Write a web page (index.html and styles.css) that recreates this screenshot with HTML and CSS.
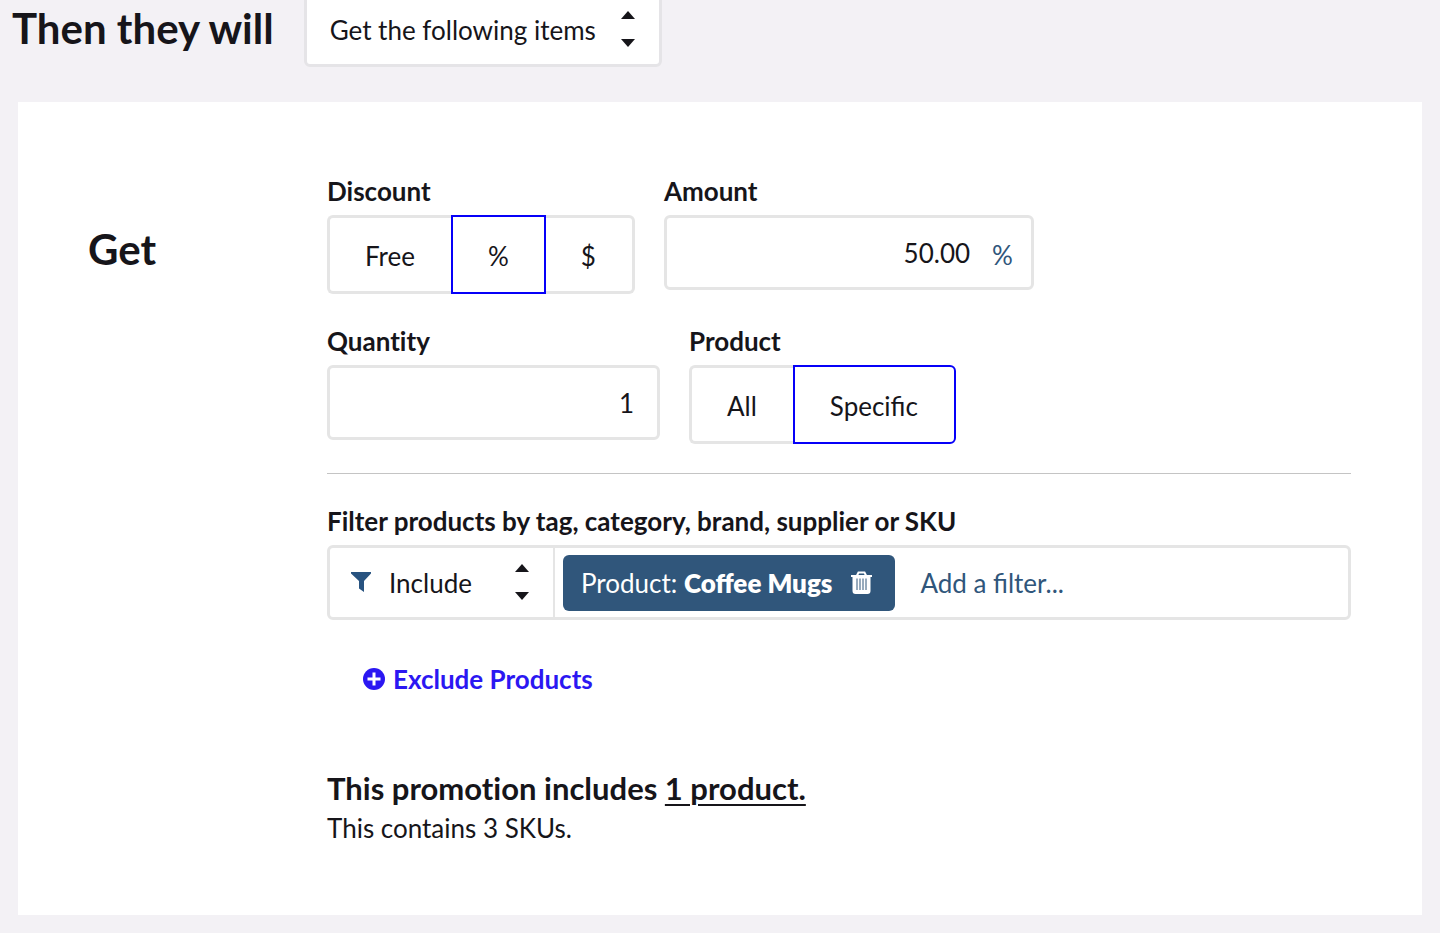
FILE: index.html
```
<!DOCTYPE html>
<html lang="en">
  <head>
    <meta charset="utf-8">
    <title>Promotion</title>
    <link rel="stylesheet" href="styles.css">
  </head>
  <body>
    <!-- Action -->
    <header class="action-bar">
      <label class="title" for="action">Then they will</label>
      <div class="select action-select">
        <select id="action">
          <option>Get the following items</option>
          <option>Get a discount</option>
        </select>
        <svg class="arrows" viewBox="0 0 14 36" aria-hidden="true">
          <path d="M0 8 7 0l7 8zM0 28h14l-7 8z"/>
        </svg>
      </div>
    </header>

    <main class="panel">
      <h2 class="title panel-title">Get</h2>

      <div class="panel-body">
        <!-- Discount -->
        <div class="row">
          <div class="field">
            <span class="label" id="discount-label">Discount</span>
            <div class="toggle" role="group" aria-labelledby="discount-label">
              <button type="button">Free</button>
              <button type="button" class="active" aria-pressed="true">%</button>
              <button type="button">$</button>
            </div>
          </div>
          <div class="field amount">
            <label class="label" for="amount">Amount</label>
            <div class="input-box">
              <input type="text" id="amount" value="50.00">
              <span class="unit">%</span>
            </div>
          </div>
        </div>

        <!-- Quantity -->
        <div class="row">
          <div class="field quantity">
            <label class="label" for="quantity">Quantity</label>
            <div class="input-box">
              <input type="text" id="quantity" value="1">
            </div>
          </div>
          <div class="field">
            <span class="label" id="product-label">Product</span>
            <div class="toggle" role="group" aria-labelledby="product-label">
              <button type="button">All</button>
              <button type="button" class="active" aria-pressed="true">Specific</button>
            </div>
          </div>
        </div>

        <hr>

        <!-- Product filters -->
        <div class="field">
          <label class="label" for="filter">Filter products by tag, category, brand, supplier or SKU</label>
          <div class="filter-box">
            <div class="select filter-select">
              <svg class="funnel" viewBox="0 0 20 20" aria-hidden="true">
                <path d="M0 0h20v1.500l-7 7.500V20l-5-3.500V9L0 1.500z"/>
              </svg>
              <select id="filter-mode" aria-label="Filter mode">
                <option>Include</option>
                <option>Exclude</option>
              </select>
              <svg class="arrows" viewBox="0 0 14 36" aria-hidden="true">
                <path d="M0 8 7 0l7 8zM0 28h14l-7 8z"/>
              </svg>
            </div>
            <div class="tag">
              <span>Product: <b>Coffee Mugs</b></span>
              <button type="button" aria-label="Remove filter">
                <svg class="trash" viewBox="0 0 21 23" aria-hidden="true">
                  <path class="lid" d="M6 4.500 7.500 1.500h6L15 4.500"/>
                  <path d="M0 4h21v2h-1.500v14q0 3-3 3h-12q-3 0-3-3V6H0z"/>
                  <path class="slots" d="M6 7.500V19M9 7.500V19M12 7.500V19M15 7.500V19"/>
                </svg>
              </button>
            </div>
            <input type="text" id="filter" placeholder="Add a filter...">
          </div>
        </div>

        <button type="button" class="exclude">
          <svg viewBox="0 0 22 22" aria-hidden="true">
            <circle cx="11" cy="11" r="11"/>
            <path d="M11 4.500v13M4.500 11h13"/>
          </svg>
          Exclude Products
        </button>

        <!-- Summary -->
        <h3 class="summary">This promotion includes <a href="#">1 product.</a></h3>
        <p class="summary-note">This contains 3 SKUs.</p>
      </div>
    </main>
  </body>
</html>
```

FILE: styles.css
```
* {
  margin: 0;
  padding: 0;
  box-sizing: border-box;
}

body {
  background: #f3f1f5;
  color: #16151a;
  font-family: Lato, "Liberation Sans", sans-serif;
  font-size: 26px;
  line-height: 32px;
  padding: 0 18px 18px;
}

button,
input,
select {
  font: inherit;
  color: inherit;
  background: none;
  border: 0;
  outline: 0;
  appearance: none;
}

button,
select {
  cursor: pointer;
}

.title {
  font-size: 42px;
  line-height: 52px;
  font-weight: 700;
}

/* Action bar, scrolled slightly under the top edge */
.action-bar {
  display: flex;
  align-items: flex-start;
  gap: 30px;
  margin: -8px 0 35px -6px;
}

.action-bar .title {
  margin-top: 10px;
}

.select {
  position: relative;
  display: flex;
  align-items: center;
}

.select select {
  width: 100%;
  height: 100%;
}

.arrows {
  position: absolute;
  right: 24px;
  width: 14px;
  height: 36px;
  margin-bottom: 2px;
  fill: #16151a;
  pointer-events: none;
}

.action-select {
  width: 358px;
  height: 75px;
  background: #fff;
  border: 3px solid #e5e4e7;
  border-radius: 6px;
}

.action-select select {
  padding-left: 23px;
}

/* Panel */
.panel {
  display: flex;
  background: #fff;
  padding: 73px 71px 71px 70px;
}

.panel-title {
  flex: 0 0 239px;
  margin-top: 48px;
}

.panel-body {
  flex: 1;
  min-width: 0;
}

.row {
  display: flex;
  align-items: flex-start;
  gap: 29px;
  margin-bottom: 31px;
}

.label {
  display: block;
  font-weight: 700;
  font-variant-ligatures: none;
  margin-bottom: 8px;
}

.amount {
  width: 370px;
}

.quantity {
  width: 333px;
}

.input-box,
.filter-box {
  display: flex;
  align-items: center;
  height: 75px;
  border: 3px solid #e5e5e5;
  border-radius: 6px;
}

.input-box {
  padding-right: 23px;
}

.input-box input {
  flex: 1;
  min-width: 0;
  height: 100%;
  text-align: right;
}

.amount .input-box {
  padding-right: 18px;
  gap: 22px;
}

.unit {
  color: #30567b;
  padding-top: 4px;
}

.toggle {
  display: flex;
  height: 79px;
}

.toggle button {
  padding: 2px 35px 0;
  border: 3px solid #e5e5e5;
  border-width: 3px 0;
}

.toggle button:first-child {
  padding: 2px 36px 0 35px;
  border-left-width: 3px;
  border-radius: 6px 0 0 6px;
}

.toggle button:last-child {
  padding: 2px 36px 0 35px;
  border-right-width: 3px;
  border-radius: 0 6px 6px 0;
}

.toggle button.active {
  border: 2px solid #0600f8;
}

hr {
  border: 0;
  border-top: 1px solid #c4c4c4;
  margin: -2px 0 31px;
}

/* Filters */
.filter-select {
  width: 225px;
  height: 100%;
  border-right: 2px solid #e5e5e5;
}

.filter-select select {
  padding-left: 59px;
}

.funnel {
  position: absolute;
  left: 21px;
  width: 20px;
  height: 20px;
  margin-bottom: 2px;
  fill: #285380;
  pointer-events: none;
}

.tag {
  display: flex;
  align-items: center;
  gap: 19px;
  height: 56px;
  margin-left: 8px;
  padding: 0 23px 0 18px;
  background: #30567b;
  border-radius: 6px;
  color: #fff;
  white-space: nowrap;
}

.tag b {
  font-weight: 800;
}

.tag button {
  display: flex;
}

.trash {
  width: 21px;
  height: 23px;
  fill: #fff;
}

.trash .lid {
  fill: none;
  stroke: #fff;
  stroke-width: 2;
}

.trash .slots {
  stroke: #30567b;
  stroke-width: 1;
}

.filter-box > input {
  flex: 1;
  min-width: 0;
  height: 100%;
  padding: 0 25px;
}

.filter-box > input::placeholder {
  color: #30567b;
  opacity: 1;
}

.exclude {
  display: flex;
  align-items: center;
  gap: 8px;
  margin: 43px 0 73px 36px;
  color: #2b17f2;
  font-weight: 700;
}

.exclude svg {
  width: 22px;
  height: 22px;
  fill: #2b17f2;
}

.exclude path {
  stroke: #fff;
  stroke-width: 3;
}

/* Summary */
.summary {
  font-size: 31px;
  line-height: 40px;
  font-weight: 700;
  font-variant-ligatures: none;
}

.summary a {
  color: inherit;
  text-decoration-thickness: 2px;
  text-underline-offset: 4px;
}

.summary-note {
  margin-top: 4px;
}
```
